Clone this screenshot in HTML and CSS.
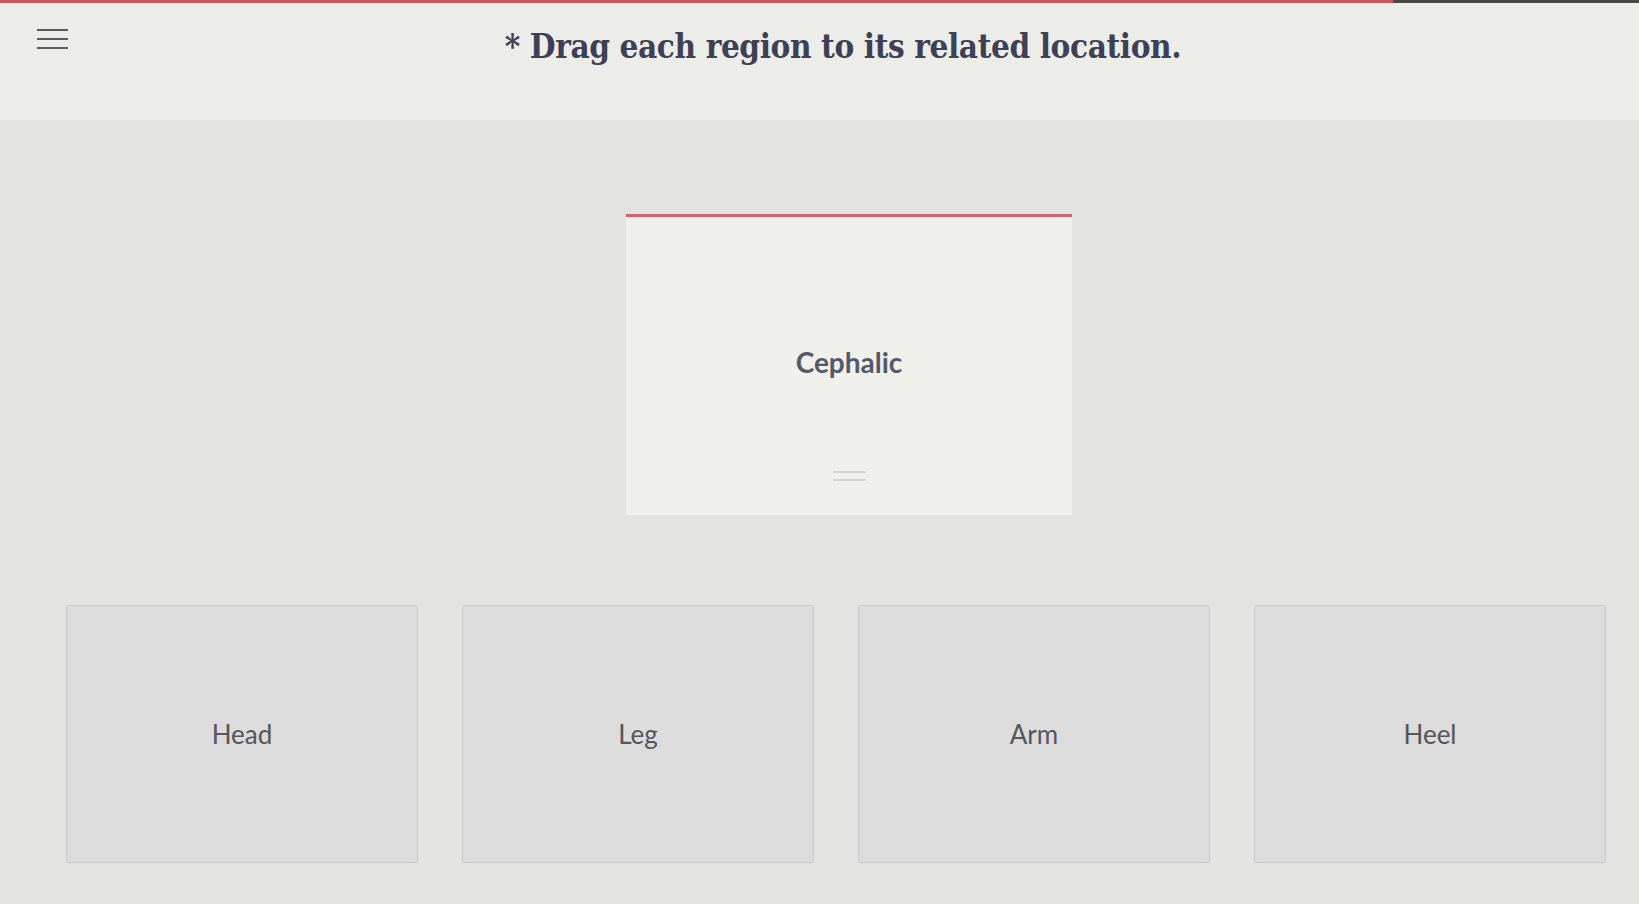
FILE: index.html
```html
<!DOCTYPE html>
<html lang="en">

<head>
    <meta charset="UTF-8">
    <meta name="viewport" content="width=device-width, initial-scale=1.0">
    <title>Drag and drop</title>
    <link rel="stylesheet" href="styles.css">
</head>

<body>
    <div class="progress">
        <div class="progress-done"></div>
    </div>

    <header>
        <button class="menu-btn" aria-label="Menu">
            <span></span>
            <span></span>
            <span></span>
        </button>
        <h1 class="question">* Drag each region to its related location.</h1>
    </header>

    <div class="content">
        <div class="drop-row">
            <div class="term-card">
                <p class="term">Cephalic</p>
                <div class="handle">
                    <span></span>
                    <span></span>
                </div>
            </div>
        </div>

        <div class="targets">
            <div class="target">Head</div>
            <div class="target">Leg</div>
            <div class="target">Arm</div>
            <div class="target">Heel</div>
        </div>
    </div>
</body>

</html>
```

FILE: styles.css
```css
* {
    margin: 0;
    padding: 0;
    box-sizing: border-box;
}
body {
    font-family: Lato, "Liberation Sans", sans-serif;
    background-color: #e3e4e2;
    height: 904px;
    overflow: hidden;
}
.progress {
    height: 3px;
    background-color: #4a4a4a;
}
.progress-done {
    width: 85%;
    height: 100%;
    background-color: #c9575a;
}
header {
    height: 117px;
    background-color: #ecede9;
    display: flex;
    align-items: flex-start;
}
.menu-btn {
    background: none;
    border: none;
    width: 31px;
    margin: 26px 0 0 37px;
    display: flex;
    flex-direction: column;
    gap: 7px;
    cursor: pointer;
}
.menu-btn span {
    display: block;
    height: 2px;
    background-color: #5b5b60;
}
.question {
    flex: 1;
    text-align: center;
    margin: 24px 21px 0 0;
    font-family: "DejaVu Serif Condensed", "DejaVu Serif", serif;
    font-weight: bold;
    font-size: 33px;
    color: #3e4055;
    letter-spacing: -0.4px;
}
.content {
    padding: 94px 33px 0 66px;
}
.drop-row {
    display: flex;
    justify-content: center;
}
.term-card {
    width: 446px;
    height: 301px;
    margin-left: 26px;
    background-color: #f0f0ec;
    border-top: 3px solid #d0646a;
    display: flex;
    flex-direction: column;
    align-items: center;
    padding-top: 128px;
}
.term {
    font-weight: bold;
    font-size: 28px;
    color: #555a68;
}
.handle {
    margin-top: 92px;
    width: 33px;
    display: flex;
    flex-direction: column;
    gap: 6px;
}
.handle span {
    display: block;
    height: 2px;
    background-color: #d3d3d0;
}
.targets {
    display: grid;
    grid-template-columns: repeat(4, 1fr);
    gap: 44px;
    margin-top: 90px;
}
.target {
    height: 258px;
    background-color: #dcdcdd;
    border: 1px solid #c9c9c9;
    border-radius: 3px;
    display: flex;
    align-items: center;
    justify-content: center;
    font-size: 26px;
    color: #55555a;
}
```
